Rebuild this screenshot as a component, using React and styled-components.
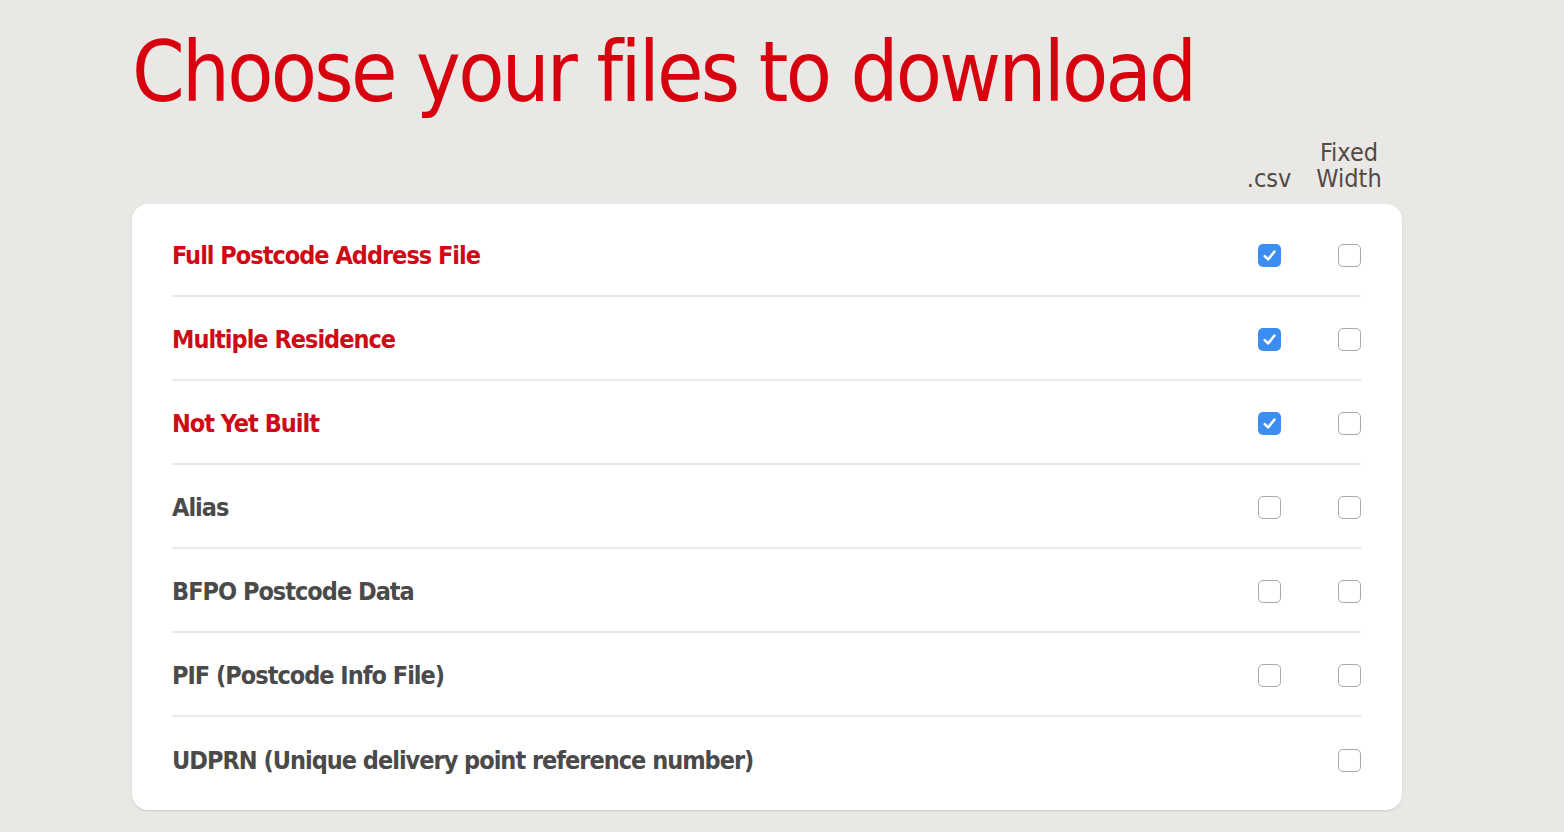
import React from "react";
import styled, { createGlobalStyle } from "styled-components";

const Global = createGlobalStyle`
  html, body { margin: 0; padding: 0; background: #eae8e4; }
  body { font-family: "DejaVu Sans Condensed", "DejaVu Sans", sans-serif; }
`;

const Page = styled.div`
  width: 1564px;
  height: 832px;
  overflow: hidden;
  padding: 0 0 0 132px;
  box-sizing: border-box;
`;

const Title = styled.h1`
  margin: 0;
  padding-top: 22px;
  font-family: "DejaVu Sans Condensed", "DejaVu Sans", sans-serif;
  font-weight: normal;
  font-size: 84px;
  line-height: 100px;
  letter-spacing: -2.7px;
  color: #d7000f;
`;

const HeaderRow = styled.div`
  width: 1270px;
  display: flex;
  justify-content: flex-end;
  align-items: flex-end;
  gap: 56px;
  padding-right: 41px;
  box-sizing: border-box;
  height: 82px;
  padding-bottom: 12px;
`;

const ColHead = styled.div`
  width: 24px;
  display: flex;
  justify-content: center;
  text-align: center;
  font-size: 25px;
  line-height: 26px;
  color: #514a45;
  white-space: nowrap;
`;

const Card = styled.div`
  width: 1270px;
  background: #fff;
  border-radius: 16px;
  box-shadow: 0 1px 2px rgba(0, 0, 0, 0.12);
  padding: 9px 41px 9px 40px;
  box-sizing: border-box;
`;

const Row = styled.div`
  display: flex;
  align-items: center;
  gap: 56px;
  height: 84px;
  border-bottom: ${(p) => (p.last ? "none" : "2px solid #ebe9e5")};
  box-sizing: border-box;
`;

const Label = styled.div`
  flex: 1;
  font-weight: bold;
  font-size: 25px;
  letter-spacing: -1px;
  color: ${(p) => (p.red ? "#cf0a16" : "#4a4a4a")};
  padding-top: 2px;
`;

const Cell = styled.div`
  width: 24px;
  display: flex;
  justify-content: center;
  padding-top: 2px;
`;

const Box = styled.div`
  width: 23px;
  height: 23px;
  border-radius: 5px;
  box-sizing: border-box;
  border: ${(p) => (p.checked ? "none" : "1.5px solid #a9a9a9")};
  background: ${(p) => (p.checked ? "#3b8df0" : "#fff")};
  display: flex;
  align-items: center;
  justify-content: center;
`;

const Check = () => (
  <svg width="17" height="17" viewBox="0 0 16 16">
    <path d="M3.5 8.5 L6.7 11.7 L12.7 4.3" fill="none" stroke="#fff" strokeWidth="2.4" strokeLinecap="round" strokeLinejoin="round" />
  </svg>
);

const rows = [
  { label: "Full Postcode Address File", red: true, csv: true },
  { label: "Multiple Residence", red: true, csv: true },
  { label: "Not Yet Built", red: true, csv: true },
  { label: "Alias" },
  { label: "BFPO Postcode Data" },
  { label: "PIF (Postcode Info File)" },
  { label: "UDPRN (Unique delivery point reference number)", noCsv: true },
];

export default function App() {
  return (
    <Page>
      <Global />
      <Title>Choose your files to download</Title>
      <HeaderRow>
        <ColHead>.csv</ColHead>
        <ColHead>Fixed<br />Width</ColHead>
      </HeaderRow>
      <Card>
        {rows.map((r, i) => (
          <Row key={r.label} last={i === rows.length - 1}>
            <Label red={r.red}>{r.label}</Label>
            <Cell>{r.noCsv ? null : <Box checked={r.csv}>{r.csv && <Check />}</Box>}</Cell>
            <Cell><Box /></Cell>
          </Row>
        ))}
      </Card>
    </Page>
  );
}
